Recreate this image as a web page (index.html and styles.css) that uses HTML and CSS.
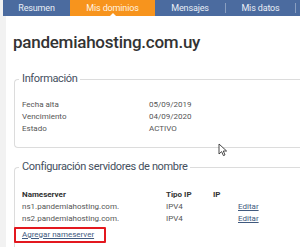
FILE: index.html
```html
<!DOCTYPE html>
<html lang="es">
<head>
    <meta charset="UTF-8">
    <meta name="viewport" content="width=device-width, initial-scale=1.0">
    <title>Mis dominios - pandemiahosting.com.uy</title>
    <link rel="stylesheet" href="styles.css">
</head>
<body>
    <div class="tabs">
        <a class="tab tab-resumen" href="#">Resumen</a>
        <a class="tab tab-dominios active" href="#">Mis dominios</a>
        <a class="tab tab-mensajes" href="#">Mensajes</a>
        <span class="sep"></span>
        <a class="tab tab-datos" href="#">Mis datos</a>
        <span class="sep"></span>
    </div>

    <div class="panel">
        <h1 class="domain">pandemiahosting.com.uy</h1>

        <!-- Información -->
        <fieldset class="box box-info">
            <legend>Información</legend>
            <div class="info-row"><span class="info-key">Fecha alta</span><span>05/09/2019</span></div>
            <div class="info-row"><span class="info-key">Vencimiento</span><span>04/09/2020</span></div>
            <div class="info-row"><span class="info-key">Estado</span><span>ACTIVO</span></div>
        </fieldset>

        <!-- Servidores de nombre -->
        <fieldset class="box box-ns">
            <legend>Configuración servidores de nombre</legend>
            <div class="ns-row ns-head">
                <span>Nameserver</span><span>Tipo IP</span><span>IP</span><span></span>
            </div>
            <div class="ns-row">
                <span>ns1.pandemiahosting.com.</span><span>IPV4</span><span></span><a href="#">Editar</a>
            </div>
            <div class="ns-row">
                <span>ns2.pandemiahosting.com.</span><span>IPV4</span><span></span><a href="#">Editar</a>
            </div>
            <div class="add-ns"><a href="#">Agregar nameserver</a></div>
        </fieldset>

        <svg class="cursor" width="10" height="14" viewBox="0 0 10 14">
            <path d="M1 1 L1 11 L3.6 8.6 L5.4 12.6 L7 11.9 L5.3 8 L8.6 8 Z" fill="#fff" stroke="#333" stroke-width="0.9" stroke-linejoin="round"/>
        </svg>
    </div>
</body>
</html>
```

FILE: styles.css
```css
:root {
    --tab-blue: #4b6b9f;
    --tab-orange: #f7941d;
    --text-color: #555555;
    --heading-color: #333333;
    --legend-color: #45505e;
    --link-color: #40597e;
    --border-color: #dcdcdc;
}

body {
    margin: 0;
    background-color: #f2f2f2;
    font-family: Roboto, "Noto Sans", sans-serif;
    color: var(--text-color);
    height: 247px;
    overflow: hidden;
}

.tabs {
    display: flex;
    align-items: center;
    height: 16px;
    margin-left: 3px;
    background-color: var(--tab-blue);
}

.tab {
    display: flex;
    align-items: center;
    justify-content: center;
    height: 100%;
    color: #e9eef6;
    text-decoration: none;
    font-size: 9px;
    letter-spacing: -0.15px;
}

.tab-resumen { width: 67px; }
.tab-dominios { width: 85px; }
.tab-mensajes { width: 70px; }
.tab-datos { width: 69px; }

.tab.active {
    position: relative;
    background-color: var(--tab-orange);
    color: #fff3e0;
}

.tab.active::after {
    content: "";
    position: absolute;
    bottom: 0;
    left: 50%;
    margin-left: -3px;
    border-left: 3px solid transparent;
    border-right: 3px solid transparent;
    border-bottom: 3px solid #ffffff;
}

.sep {
    width: 1px;
    height: 10px;
    background-color: rgba(255, 255, 255, 0.35);
}

.panel {
    position: relative;
    margin-left: 6px;
    background-color: #ffffff;
    padding-top: 16px;
}

.domain {
    margin: 0 0 0 7px;
    font-size: 17px;
    line-height: 20px;
    font-weight: 500;
    color: var(--heading-color);
    letter-spacing: -0.25px;
}

.box {
    margin: 0 0 0 8px;
    padding: 0 0 0 7px;
    border: 1px solid var(--border-color);
    border-right: none;
    border-radius: 4px 0 0 4px;
}

.box legend {
    padding: 0 3px;
    margin-left: -3px;
    font-size: 11px;
    line-height: 16px;
    letter-spacing: -0.35px;
    color: var(--legend-color);
}

.box-info {
    margin-top: 19px;
    padding-top: 12px;
    padding-bottom: 12px;
}

.box-ns {
    margin-top: 11px;
    padding-top: 14px;
    padding-bottom: 8px;
    border-bottom: none;
    border-radius: 4px 0 0 0;
}

.info-row,
.ns-row,
.add-ns {
    font-size: 8px;
    line-height: 12px;
}

.info-row {
    display: flex;
}

.info-key {
    width: 127px;
}

.ns-row {
    display: grid;
    grid-template-columns: 144px 47px 25px auto;
}

.ns-head {
    font-weight: 700;
    color: var(--heading-color);
}

.ns-row a,
.add-ns a {
    color: var(--link-color);
}

.add-ns {
    width: fit-content;
    margin: 2px 0 0 -8px;
    padding: 0 10px 0 6px;
    border: 2px solid #e3181f;
    border-radius: 1px;
}

.cursor {
    position: absolute;
    left: 212px;
    top: 127px;
}
```
